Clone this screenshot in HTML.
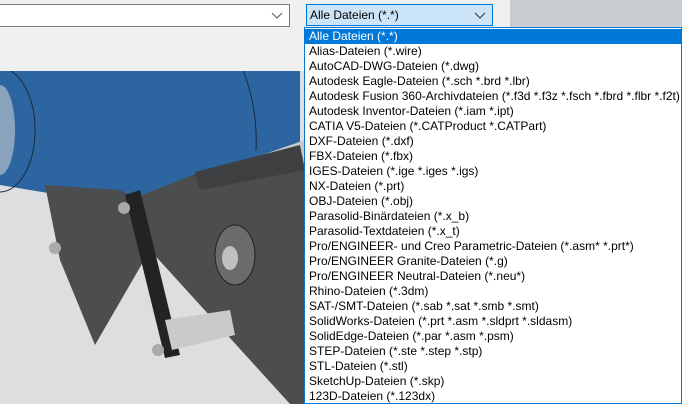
<!DOCTYPE html>
<html><head><meta charset="utf-8"><style>
*{margin:0;padding:0;box-sizing:border-box}
body{width:682px;height:404px;overflow:hidden;position:relative;background:#d3d6d9;font-family:"Liberation Sans",sans-serif;font-size:12px}
#scene{position:absolute;left:0;top:0}
#dlg{position:absolute;left:0;top:0;width:510px;height:71px;background:#f0f0f0}
.cb{position:absolute;height:23px;border:1px solid #7a7a7a;background:#fff}
.chev{position:absolute;right:6px;top:5px;width:12px;height:10px}
#list{position:absolute;left:304px;top:27px;width:378px;height:377px;background:#fff;border:1px solid #0078d7;padding-top:1px}
.it{height:15px;line-height:15px;padding-left:4px;white-space:nowrap;color:#000;letter-spacing:0}
.sel{background:#0078d7;color:#fff}
</style></head><body>
<svg id="scene" width="682" height="404" viewBox="0 0 682 404">
<rect width="682" height="404" fill="#dcdee0"/>
<rect x="510" y="0" width="172" height="404" fill="#c9ccd0"/>
<path d="M0,70 L300,70 L300,170 C250,190 200,190 150,200 L60,195 L0,185 Z" fill="#2c659f"/>
<ellipse cx="0" cy="130" rx="35" ry="62" fill="none" stroke="#1a2a3a" stroke-width="1"/>
<ellipse cx="0" cy="130" rx="15" ry="45" fill="#8aa3bd"/>
<path d="M243,70 C255,100 257,130 256,150" stroke="#1a2a3a" fill="none"/>
<polygon points="190,180 305,140 305,185 215,210" fill="#c7c9cb"/>
<polygon points="45,185 120,190 135,198 205,170 305,165 305,404 290,404 150,250 95,345 60,260" fill="#4c4d4f"/>
<polygon points="195,172 300,145 305,170 200,190" fill="#3e3f41"/>
<polygon points="125,195 140,190 180,355 165,358" fill="#222325"/>
<polygon points="165,320 230,310 235,335 172,350" fill="#c8cacc"/>
<circle cx="124" cy="208" r="6" fill="#aaa"/><circle cx="158" cy="350" r="6" fill="#aaa"/>
<circle cx="55" cy="248" r="6" fill="#aaa"/>
<ellipse cx="235" cy="255" rx="20" ry="30" fill="#6a6b6d" stroke="#222"/>
<ellipse cx="230" cy="258" rx="8" ry="12" fill="#c0c0c0"/>
</svg>
<div id="dlg">
 <div class="cb" style="left:-1px;top:4px;width:291px;border-color:#7a7a7a"><svg class="chev" viewBox="0 0 12 10"><path d="M1,3 L6,8 L11,3" fill="none" stroke="#555" stroke-width="1"/></svg></div>
 <div class="cb" style="left:306px;top:4px;width:187px;height:22px;background:#cce4f7;border-color:#0078d7;padding:3px 0 0 3px">Alle Dateien (*.*)<svg class="chev" viewBox="0 0 12 10"><path d="M1,3 L6,8 L11,3" fill="none" stroke="#333" stroke-width="1"/></svg></div>
</div>
<div id="list">
<div class="it sel">Alle Dateien (*.*)</div>
<div class="it">Alias-Dateien (*.wire)</div>
<div class="it">AutoCAD-DWG-Dateien (*.dwg)</div>
<div class="it">Autodesk Eagle-Dateien (*.sch *.brd *.lbr)</div>
<div class="it">Autodesk Fusion 360-Archivdateien (*.f3d *.f3z *.fsch *.fbrd *.flbr *.f2t)</div>
<div class="it">Autodesk Inventor-Dateien (*.iam *.ipt)</div>
<div class="it">CATIA V5-Dateien (*.CATProduct *.CATPart)</div>
<div class="it">DXF-Dateien (*.dxf)</div>
<div class="it">FBX-Dateien (*.fbx)</div>
<div class="it">IGES-Dateien (*.ige *.iges *.igs)</div>
<div class="it">NX-Dateien (*.prt)</div>
<div class="it">OBJ-Dateien (*.obj)</div>
<div class="it">Parasolid-Binärdateien (*.x_b)</div>
<div class="it">Parasolid-Textdateien (*.x_t)</div>
<div class="it">Pro/ENGINEER- und Creo Parametric-Dateien (*.asm* *.prt*)</div>
<div class="it">Pro/ENGINEER Granite-Dateien (*.g)</div>
<div class="it">Pro/ENGINEER Neutral-Dateien (*.neu*)</div>
<div class="it">Rhino-Dateien (*.3dm)</div>
<div class="it">SAT-/SMT-Dateien (*.sab *.sat *.smb *.smt)</div>
<div class="it">SolidWorks-Dateien (*.prt *.asm *.sldprt *.sldasm)</div>
<div class="it">SolidEdge-Dateien (*.par *.asm *.psm)</div>
<div class="it">STEP-Dateien (*.ste *.step *.stp)</div>
<div class="it">STL-Dateien (*.stl)</div>
<div class="it">SketchUp-Dateien (*.skp)</div>
<div class="it">123D-Dateien (*.123dx)</div>
</div>
</body></html>
